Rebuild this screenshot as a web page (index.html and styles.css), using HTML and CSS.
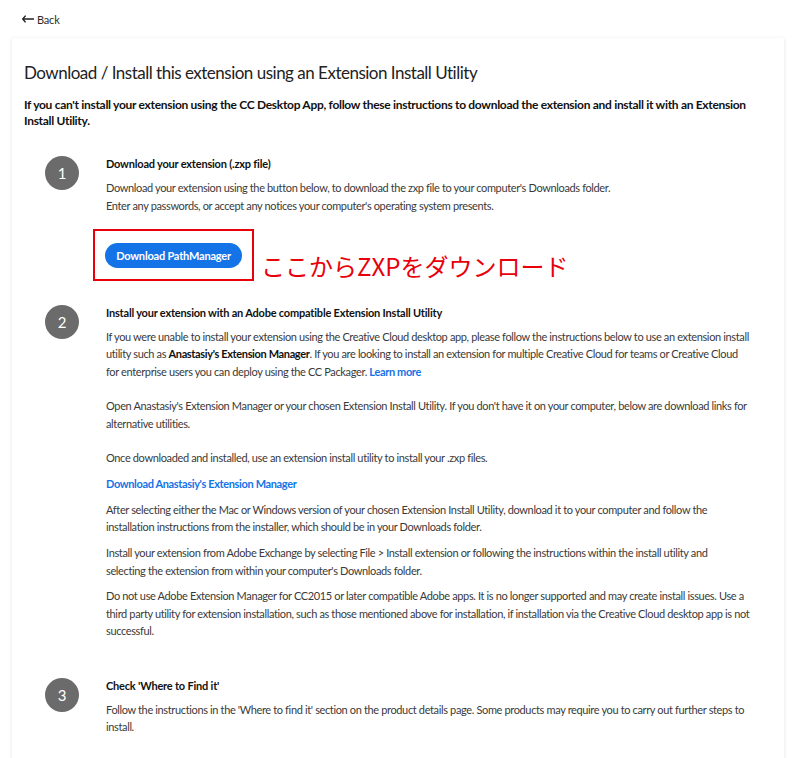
FILE: index.html
```html
<!DOCTYPE html>
<html lang="en">
<head>
  <meta charset="UTF-8">
  <title>Download / Install this extension</title>
  <link rel="stylesheet" href="styles.css">
</head>
<body>

<a class="back" href="#">
  <svg width="12" height="8" viewBox="0 0 12 8"><path d="M3.6 0.6 L0.7 4 L3.6 7.4 M1 4 H12" fill="none" stroke="#222" stroke-width="1.4"/></svg>
  Back
</a>

<div class="card">
  <h1>Download / Install this extension using an Extension Install Utility</h1>
  <p class="intro">If you can't install your extension using the CC Desktop App, follow these instructions to download the extension and install it with an Extension Install Utility.</p>

  <div class="step step-one">
    <div class="num">1</div>
    <div class="body">
      <h3>Download your extension (.zxp file)</h3>
      <p>Download your extension using the button below, to download the zxp file to your computer's Downloads folder.<br>Enter any passwords, or accept any notices your computer's operating system presents.</p>
      <div class="download-row">
        <div class="mark">
          <button class="btn">Download PathManager</button>
        </div>
        <span class="note">ここからZXPをダウンロード</span>
      </div>
    </div>
  </div>

  <div class="step step-two">
    <div class="num">2</div>
    <div class="body">
      <h3>Install your extension with an Adobe compatible Extension Install Utility</h3>
      <p class="gap">If you were unable to install your extension using the Creative Cloud desktop app, please follow the instructions below to use an extension install utility such as <b>Anastasiy's Extension Manager</b>. If you are looking to install an extension for multiple Creative Cloud for teams or Creative Cloud for enterprise users you can deploy using the CC Packager. <a href="#">Learn more</a></p>
      <p class="gap">Open Anastasiy's Extension Manager or your chosen Extension Install Utility. If you don't have it on your computer, below are download links for alternative utilities.</p>
      <p>Once downloaded and installed, use an extension install utility to install your .zxp files.</p>
      <p><a href="#">Download Anastasiy's Extension Manager</a></p>
      <p>After selecting either the Mac or Windows version of your chosen Extension Install Utility, download it to your computer and follow the installation instructions from the installer, which should be in your Downloads folder.</p>
      <p>Install your extension from Adobe Exchange by selecting File &gt; Install extension or following the instructions within the install utility and<br>selecting the extension from within your computer's Downloads folder.</p>
      <p>Do not use Adobe Extension Manager for CC2015 or later compatible Adobe apps. It is no longer supported and may create install issues. Use a third party utility for extension installation, such as those mentioned above for installation, if installation via the Creative Cloud desktop app is not successful.</p>
    </div>
  </div>

  <div class="step step-three">
    <div class="num">3</div>
    <div class="body">
      <h3>Check 'Where to Find it'</h3>
      <p>Follow the instructions in the 'Where to find it' section on the product details page. Some products may require you to carry out further steps to install.</p>
    </div>
  </div>
</div>

</body>
</html>
```

FILE: styles.css
```css
/* General */
body {
  margin: 0;
  padding: 0 16px 0 12px;
  font-family: Lato, "Noto Sans", sans-serif;
  color: #2c2c2c;
  background-color: #fff;
}
.back {
  display: flex;
  align-items: center;
  gap: 3px;
  height: 38px;
  padding-left: 10px;
  font-size: 11px;
  letter-spacing: -0.2px;
  color: #2c2c2c;
  text-decoration: none;
}

/* Card */
.card {
  background: #fff;
  box-shadow: 0 1px 4px rgba(0, 0, 0, 0.12);
  padding: 24px 12px 30px;
}
h1 {
  margin: 0;
  font-size: 17px;
  font-weight: 400;
  letter-spacing: -0.5px;
  color: #222;
}
.intro {
  margin: 14px 0 0;
  font-size: 12px;
  line-height: 16px;
  font-weight: 700;
  letter-spacing: -0.3px;
  color: #111;
}

/* Steps */
.step {
  display: grid;
  grid-template-columns: 34px 1fr;
  column-gap: 27px;
  padding-left: 21px;
}
.step-one { margin-top: 28px; }
.step-two { margin-top: 25px; }
.step-three { margin-top: 39px; }
.num {
  width: 34px;
  height: 34px;
  margin-top: -1px;
  border-radius: 50%;
  background: #6b6b6b;
  color: #fff;
  font-size: 15px;
  line-height: 34px;
  text-align: center;
}
.body {
  padding-right: 20px;
}
h3 {
  margin: 0;
  font-size: 11px;
  line-height: 14px;
  font-weight: 700;
  letter-spacing: -0.2px;
  color: #111;
}
.body p {
  margin: 8.5px 0 0;
  font-size: 11px;
  line-height: 17.4px;
  letter-spacing: -0.36px;
  color: #3a3a3a;
}
.body h3 + p { margin-top: 8px; }
.body p.gap { margin-bottom: 17px; }
.step-one .body p { line-height: 18px; }
.body a {
  color: #1473e6;
  font-weight: 700;
  text-decoration: none;
}
.body b { color: #111; }

/* Download button */
.download-row {
  display: flex;
  align-items: flex-end;
  margin: 14px 0 0 -13px;
}
.mark {
  border: 2px solid #e8000b;
  padding: 12px 10px 11px 10px;
  width: 137px;
}
.btn {
  display: block;
  width: 137px;
  height: 25px;
  border: none;
  border-radius: 13px;
  background: #1473e6;
  color: #fff;
  font-family: Lato, sans-serif;
  font-size: 11px;
  font-weight: 700;
  letter-spacing: -0.2px;
}
.note {
  margin: 0 0 0 7px;
  font-family: "Noto Sans CJK JP", sans-serif;
  font-size: 24px;
  line-height: 30px;
  color: #e8000b;
}
```
